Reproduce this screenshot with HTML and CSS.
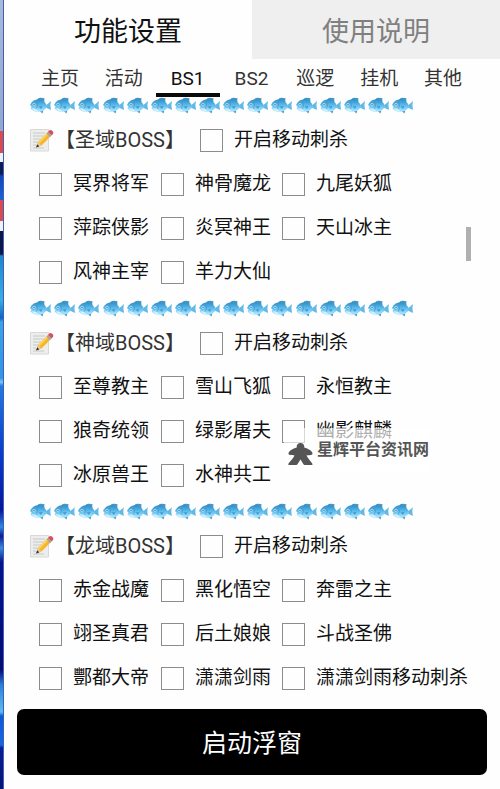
FILE: index.html
```html
<!DOCTYPE html>
<html lang="zh-CN">
<head>
<meta charset="utf-8">
<meta name="viewport" content="width=device-width, initial-scale=1">
<title>功能设置</title>
<link rel="stylesheet" href="styles.css">
</head>
<body>
<svg class="defs" aria-hidden="true">
  <defs>
    <linearGradient id="scales" x1="0" y1="0" x2="0" y2="1">
      <stop offset="0" stop-color="#2f8cc4"/>
      <stop offset=".4" stop-color="#52b4e8"/>
      <stop offset=".75" stop-color="#8ad6f8"/>
      <stop offset="1" stop-color="#bfeafc"/>
    </linearGradient>
    <g id="fish">
      <path d="M7 2.500 Q8 0 11 .3 L14.500 .8 Q14 2.500 14.500 5Z" fill="#4496c6"/>
      <path d="M15.500 8 Q18 6.500 21 3.500 Q19.700 7.500 21 12.500 Q18.500 11 15.500 10Z" fill="#62b8e6"/>
      <path d="M9 13 L12.500 16 L13.500 12Z" fill="#4a9dcb"/>
      <path d="M0 7.500 Q2.500 1.800 8.500 1.700 Q14 2 17 8.200 L17 9.500 Q13.500 14.300 8 14.500 Q3 14.300 .4 10.500 L1.800 9.400Z" fill="url(#scales)"/>
      <path d="M1.500 10.800 Q5 10.500 8 13 Q8 14.300 6 14.200 Q3.500 13.500 1.500 10.800Z" fill="#d4f0fc"/>
      <path d="M6.800 4.500 Q8.300 8 6.500 11" fill="none" stroke="#3d97cc" stroke-width=".7"/>
      <path d="M8.500 9 L12.500 8.500 L11 11.500Z" fill="#3f9bd0"/>
      <circle cx="4" cy="6.800" r="1.300" fill="#e8f8ff"/>
      <circle cx="4" cy="6.800" r=".7" fill="#1c4660"/>
    </g>
    <symbol id="shoal" viewBox="0 0 386 16">
      <use href="#fish" x="0"/><use href="#fish" x="24"/><use href="#fish" x="48"/><use href="#fish" x="73"/>
      <use href="#fish" x="97"/><use href="#fish" x="121"/><use href="#fish" x="145"/><use href="#fish" x="169"/>
      <use href="#fish" x="193"/><use href="#fish" x="217"/><use href="#fish" x="241"/><use href="#fish" x="266"/>
      <use href="#fish" x="290"/><use href="#fish" x="314"/><use href="#fish" x="338"/><use href="#fish" x="362"/>
    </symbol>
    <symbol id="memo" viewBox="0 0 24 24">
      <path d="M.5 1.500H18.500V23H.5Z" fill="#ededeb" stroke="#d8d8d6"/>
      <path d="M3 5H15M3 8H14M3 11H11M3 14H8M3 17H6M3 20H14" stroke="#c6c9cc" stroke-width="1"/>
      <path d="M6.500 19 L8 14 L17.500 4.500 L21 8 L11.500 17.500Z" fill="#f5b52c"/>
      <path d="M8 14 L17.500 4.500 L18.700 5.700 L9.500 15.200Z" fill="#ffd25a"/>
      <path d="M6 19.500 L8 14 L11.500 17.500Z" fill="#e8c79a"/>
      <path d="M6 19.500 L7.200 16.300 L9.300 18.400Z" fill="#333"/>
      <path d="M16.500 5.500 L18 4 L21.500 7.500 L20 9Z" fill="#9aa5ad"/>
      <path d="M18 4 L19.500 2.300 Q21 1.500 22.500 3 Q24 4.700 23 6 L21.500 7.500Z" fill="#d9505a"/>
    </symbol>
  </defs>
</svg>

<div class="backdrop" aria-hidden="true"></div>

<div class="panel">
  <nav class="pages">
    <button class="page page-on" type="button">功能设置</button>
    <button class="page" type="button">使用说明</button>
  </nav>
  <nav class="tabs">
    <button class="tab" type="button">主页</button>
    <button class="tab" type="button">活动</button>
    <button class="tab tab-on" type="button">BS1</button>
    <button class="tab" type="button">BS2</button>
    <button class="tab" type="button">巡逻</button>
    <button class="tab" type="button">挂机</button>
    <button class="tab" type="button">其他</button>
  </nav>

  <main class="content">
    <section class="group">
      <svg class="shoal" aria-hidden="true"><use href="#shoal"/></svg>
      <div class="heading">
        <svg class="memo" aria-hidden="true"><use href="#memo"/></svg>
        <h2 class="name">【圣域BOSS】</h2>
        <label class="option"><input type="checkbox" class="box">开启移动刺杀</label>
      </div>
      <div class="options">
        <label class="option"><input type="checkbox" class="box">冥界将军</label>
        <label class="option"><input type="checkbox" class="box">神骨魔龙</label>
        <label class="option"><input type="checkbox" class="box">九尾妖狐</label>
        <label class="option"><input type="checkbox" class="box">萍踪侠影</label>
        <label class="option"><input type="checkbox" class="box">炎冥神王</label>
        <label class="option"><input type="checkbox" class="box">天山冰主</label>
        <label class="option"><input type="checkbox" class="box">风神主宰</label>
        <label class="option"><input type="checkbox" class="box">羊力大仙</label>
      </div>
    </section>

    <section class="group">
      <svg class="shoal" aria-hidden="true"><use href="#shoal"/></svg>
      <div class="heading">
        <svg class="memo" aria-hidden="true"><use href="#memo"/></svg>
        <h2 class="name">【神域BOSS】</h2>
        <label class="option"><input type="checkbox" class="box">开启移动刺杀</label>
      </div>
      <div class="options">
        <label class="option"><input type="checkbox" class="box">至尊教主</label>
        <label class="option"><input type="checkbox" class="box">雪山飞狐</label>
        <label class="option"><input type="checkbox" class="box">永恒教主</label>
        <label class="option"><input type="checkbox" class="box">狼奇统领</label>
        <label class="option"><input type="checkbox" class="box">绿影屠夫</label>
        <label class="option"><input type="checkbox" class="box">幽影麒麟</label>
        <label class="option"><input type="checkbox" class="box">冰原兽王</label>
        <label class="option"><input type="checkbox" class="box">水神共工</label>
      </div>
      <div class="watermark">
        <svg class="meeple" viewBox="0 0 25 22" aria-hidden="true"><path d="M12.500 0C15 0 16.500 1.600 16.300 4.500C20 5.500 24.500 8 24.500 10.500C24.500 12.500 21 12 18.500 12.500C20 15.500 23 18.500 24.500 21C24.700 22 24 22 23 22H16.500C15.500 22 14 18.500 12.500 16.500C11 18.500 9.500 22 8.500 22H1.500C.5 22 0 21.500 .5 20.500C2.500 18 5 15.500 6.500 12.500C4 12 .5 12.500 .5 10.500C.5 8 5 5.500 8.700 4.500C8.500 1.600 10 0 12.500 0Z" fill="#555"/></svg>
        <span>星辉平台资讯网</span>
      </div>
    </section>

    <section class="group">
      <svg class="shoal" aria-hidden="true"><use href="#shoal"/></svg>
      <div class="heading">
        <svg class="memo" aria-hidden="true"><use href="#memo"/></svg>
        <h2 class="name">【龙域BOSS】</h2>
        <label class="option"><input type="checkbox" class="box">开启移动刺杀</label>
      </div>
      <div class="options">
        <label class="option"><input type="checkbox" class="box">赤金战魔</label>
        <label class="option"><input type="checkbox" class="box">黑化悟空</label>
        <label class="option"><input type="checkbox" class="box">奔雷之主</label>
        <label class="option"><input type="checkbox" class="box">翊圣真君</label>
        <label class="option"><input type="checkbox" class="box">后土娘娘</label>
        <label class="option"><input type="checkbox" class="box">斗战圣佛</label>
        <label class="option"><input type="checkbox" class="box">酆都大帝</label>
        <label class="option"><input type="checkbox" class="box">潇潇剑雨</label>
        <label class="option"><input type="checkbox" class="box">潇潇剑雨移动刺杀</label>
      </div>
    </section>
    <div class="thumb" aria-hidden="true"></div>
  </main>

  <button class="launch" type="button">启动浮窗</button>
</div>
</body>
</html>
```
FILE: styles.css
```css
* {
  box-sizing: border-box;
}

body {
  margin: 0;
  display: flex;
  min-height: 100vh;
  background: #fefefe;
  color: #111;
  font-family: Roboto, "Noto Sans CJK SC", sans-serif;
  font-size: 19px;
  line-height: 28px;
}

button {
  margin: 0;
  padding: 0;
  border: 0;
  background: none;
  color: inherit;
  font: inherit;
}

.defs {
  position: absolute;
  width: 0;
  height: 0;
}

/* Sliver of the wallpaper showing beside the panel */
.backdrop {
  flex: none;
  width: 4px;
  border-right: 1px solid #3f62a8;
  background: linear-gradient(
    #a9b9dc 0, #93a6d0 131px,
    #dc4a50 131px, #dc4a50 153px,
    #eef2fa 153px, #eef2fa 162px,
    #101c58 162px, #101c58 174px,
    #1248c0 176px, #1a62d8 200px,
    #dc4a50 200px, #dc4a50 221px,
    #eef2fa 221px, #eef2fa 231px,
    #0c1648 231px, #0c1648 254px,
    #1f86d0 256px, #36aee8 300px,
    #0f63c8 318px, #3ba2ec 322px,
    #2f96e8 378px, #7cc8f4 382px,
    #1f7ae4 386px, #0a3fd0 450px,
    #0714a0 510px, #2d8ae6 527px,
    #0a1a98 536px, #3b8ae0 548px,
    #071290 562px, #050c78 670px,
    #2a80e0 685px, #5cbcf6 712px,
    #0d58dc 716px, #1668e4 745px,
    #0a1c98 748px, #081478 100%
  );
}

.panel {
  flex: 1;
  min-width: 0;
}

.pages {
  display: grid;
  grid-template-columns: 1fr 1fr;
}

.page {
  height: 59px;
  padding-top: 4px;
  background: #efefef;
  color: #808080;
  font-size: 27px;
}

.page-on {
  background: #fefefe;
  color: #111;
}

.tabs {
  display: grid;
  grid-template-columns: repeat(7, 1fr);
  padding: 0 25px 0 24px;
}

.tab {
  height: 38px;
  padding-top: 6px;
  border-bottom: 4px solid transparent;
  color: #333;
}

.tab-on {
  border-color: #0a0a0a;
  color: #111;
}

.content {
  position: relative;
  padding-left: 26px;
}

.group {
  position: relative;
  padding-bottom: 6px;
}

.shoal {
  display: block;
  width: 386px;
  height: 21px;
  padding-bottom: 4px;
}

.heading {
  display: flex;
  align-items: center;
  height: 44px;
}

.memo {
  width: 24px;
  height: 24px;
}

.name {
  margin: 0 15px 0 1px;
  color: #333;
  font-size: 20px;
  font-weight: 400;
}

.options {
  display: grid;
  grid-template-columns: 122px 121px 1fr;
  grid-auto-rows: 44px;
  padding-left: 9px;
}

.option {
  display: flex;
  align-items: center;
  gap: 11px;
  white-space: nowrap;
}

.box {
  flex: none;
  width: 23px;
  height: 23px;
  margin: 0;
  border: 1px solid #8c8c8c;
  background: #fefefe;
  appearance: none;
}

.box:checked {
  background: #111;
}

/* Translucent site mark lying over the list */
.watermark {
  position: absolute;
  top: 128px;
  left: 254px;
  display: flex;
  align-items: center;
  gap: 4px;
  height: 44px;
  padding-left: 4px;
  background: rgba(255, 255, 255, 0.65);
  color: #555;
  font-size: 16px;
  font-weight: 700;
  pointer-events: none;
}

.meeple {
  width: 25px;
  height: 22px;
  margin-top: 8px;
}

.thumb {
  position: absolute;
  top: 130px;
  right: 29px;
  width: 5px;
  height: 34px;
  background: #b0b0b0;
}

.launch {
  display: block;
  width: calc(100% - 26px);
  height: 66px;
  margin: 3px 13px 14px;
  padding-top: 3px;
  border-radius: 7px;
  background: #000;
  color: #fff;
  font-size: 25px;
}
```
